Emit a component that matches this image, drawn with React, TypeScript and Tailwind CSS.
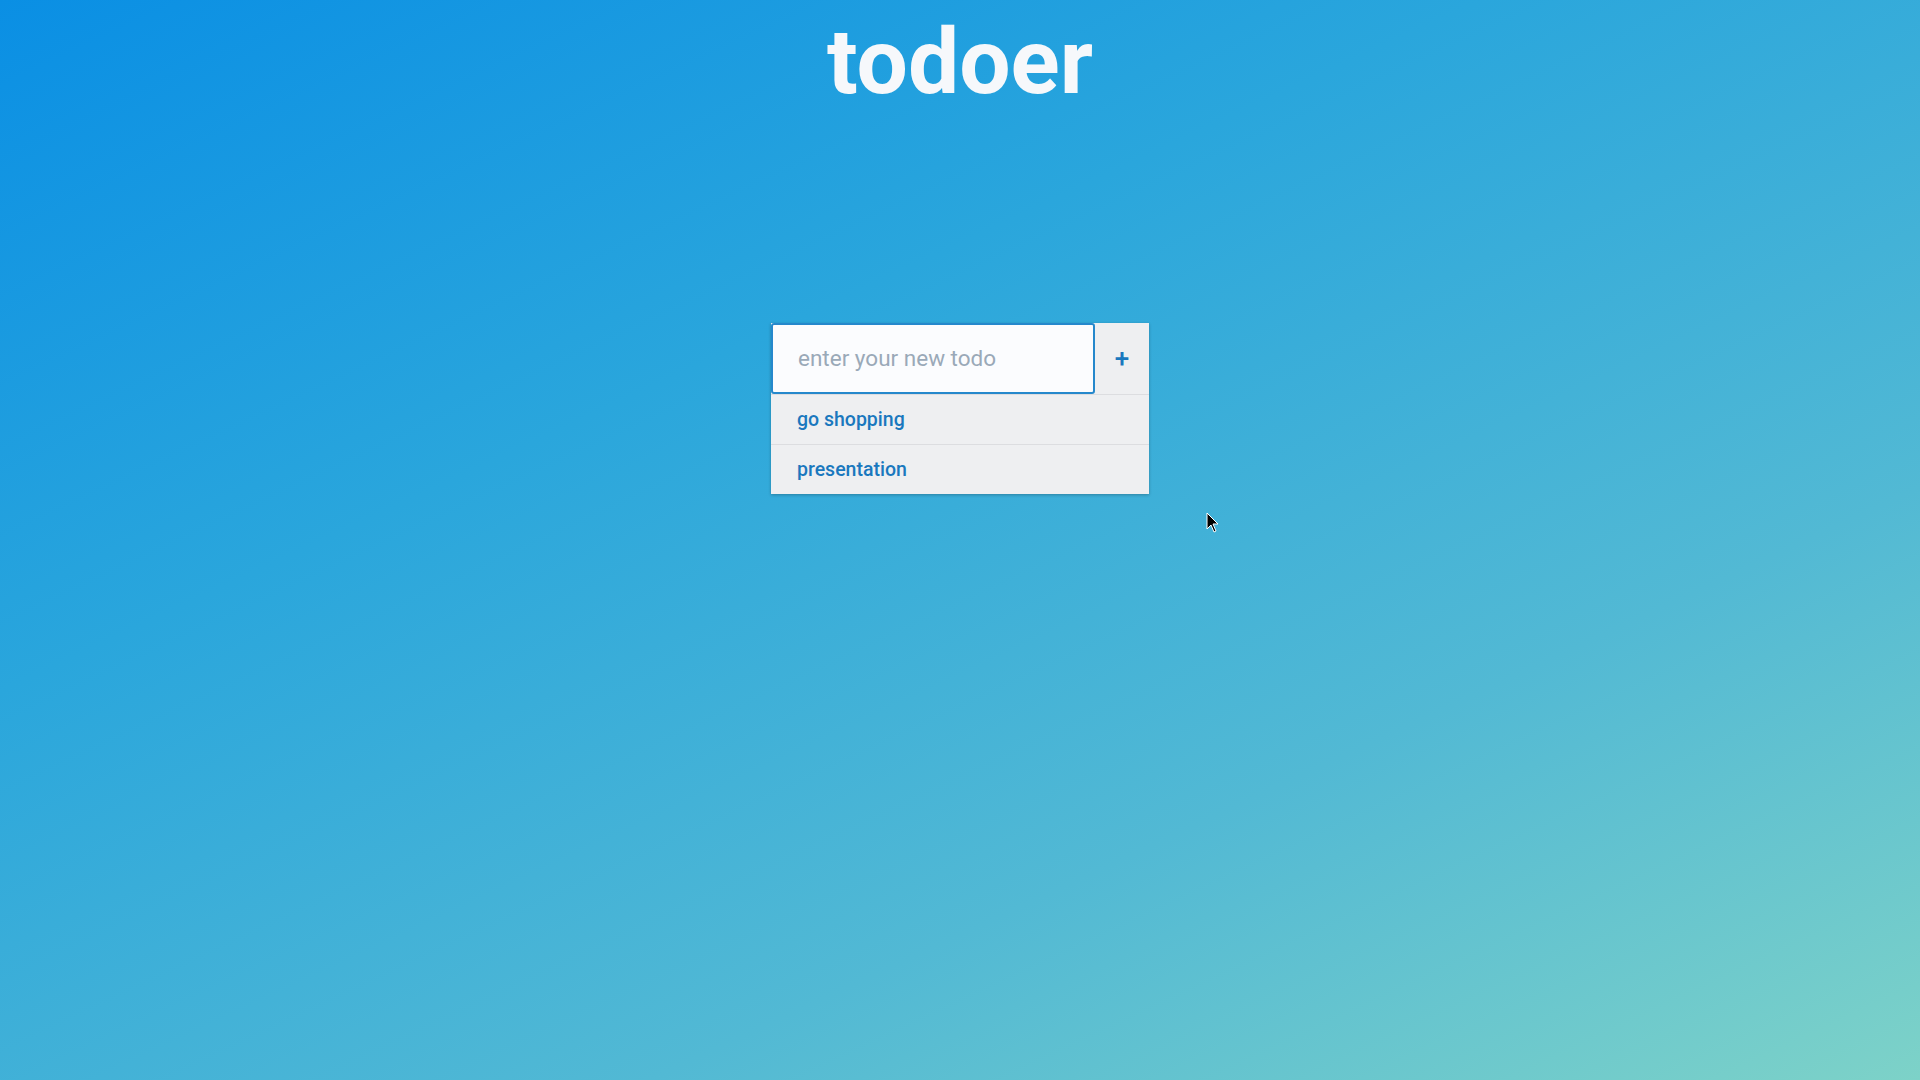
import React from "react";

export default function App() {
  return (
    <div
      className="relative w-full h-[1080px] overflow-hidden bg-[linear-gradient(155deg,#0a8fe4_0%,#2aa6dc_35%,#52b9d4_70%,#7dd2c8_100%)]"
      style={{ fontFamily: "Roboto, 'Noto Sans', sans-serif" }}
    >
      <div className="flex flex-col items-center">
        <h1 className="text-[91px] leading-none font-bold text-[#f6f8fb] mt-[17px] tracking-[0px]">todoer</h1>
        <div className="mt-[215px] w-[378px] bg-[#eeeff1] shadow-[0_1px_3px_rgba(0,0,0,0.25)]">
          <div className="flex h-[71px]">
            <div className="flex-1 border-2 border-[#2588cc] rounded-[3px] bg-[#fbfcfe] flex items-center pl-[25px]">
              <input
                className="w-full outline-none bg-transparent text-[22.5px] text-[#333] placeholder:text-[#9aa9b8]"
                placeholder="enter your new todo"
                style={{ fontFamily: "Roboto, sans-serif" }}
              />
            </div>
            <button className="w-[54px] flex items-center justify-center text-[#1a78be] text-[26px] font-medium">+</button>
          </div>
          <div className="border-t border-[#dcdde0] h-[50px] flex items-center pl-[26px] text-[19.5px] font-medium text-[#1a78be]">
            go shopping
          </div>
          <div className="border-t border-[#dcdde0] h-[50px] flex items-center pl-[26px] text-[19.5px] font-medium text-[#1a78be]">
            presentation
          </div>
        </div>
      </div>
      <svg className="absolute left-[1206px] top-[512px]" width="14" height="22" viewBox="0 0 14 22">
        <path d="M1 1 L1 17 L5 13 L8 20 L10 19 L7 12 L12 12 Z" fill="#000" stroke="#fff" strokeWidth="1" />
      </svg>
    </div>
  );
}
